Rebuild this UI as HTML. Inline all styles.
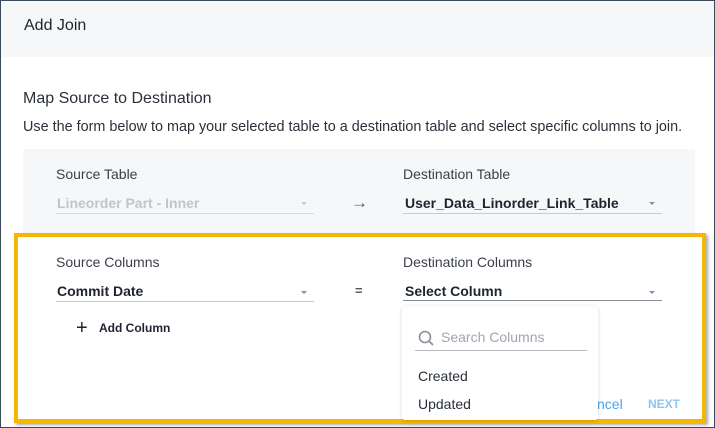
<!DOCTYPE html>
<html><head><style>
body{margin:0;width:715px;height:428px;overflow:hidden;font-family:"Liberation Sans",sans-serif;background:#fff;position:relative}
.frame{position:absolute;left:0;top:0;width:713px;height:426px;border:1px solid #3a4a5a;}
.hdr{position:absolute;left:1px;top:1px;width:713px;height:56px;background:#f6f7f9}
.t{position:absolute;white-space:nowrap;color:#1d232f}
.panel{position:absolute;left:23px;top:149px;width:672px;height:270px;background:#f6f7f9}
.line{position:absolute;height:1px;background:#c8ccd2}
.caret{position:absolute;width:0;height:0;border-left:3px solid transparent;border-right:3px solid transparent;border-top:3px solid #8a909a}
.yb{position:absolute;left:14px;top:233px;width:684px;height:182px;border:4px solid #f5b700;background:#fff;box-shadow:2px 2px 3px rgba(0,0,0,.35)}
</style></head><body>
<div class="frame"></div>
<div class="hdr"></div>
<div class="t" style="left:24px;top:17px;font-size:16px">Add Join</div>
<div class="t" style="left:23px;top:90px;font-size:16px;color:#2a303b">Map Source to Destination</div>
<div class="t" style="left:23px;top:119px;font-size:14.4px;color:#2a303b">Use the form below to map your selected table to a destination table and select specific columns to join.</div>
<div class="panel"></div>
<div class="t" style="left:56px;top:166px;font-size:14px;color:#3a404a">Source Table</div>
<div class="t" style="left:403px;top:166px;font-size:14px;color:#3a404a">Destination Table</div>
<div class="t" style="left:57px;top:195px;font-size:14px;color:#c0c5cc;font-weight:bold">Lineorder Part - Inner</div>
<div class="line" style="left:56px;top:213px;width:258px;background:#d8dbe0"></div>
<div class="caret" style="left:301px;top:202px;border-top-color:#c8ccd2"></div>
<div class="t" style="left:351px;top:193px;font-size:17px;color:#555">→</div>
<div class="t" style="left:405px;top:195px;font-size:14px;font-weight:bold">User_Data_Linorder_Link_Table</div>
<div class="line" style="left:403px;top:213px;width:259px"></div>
<div class="caret" style="left:649px;top:202px"></div>
<div class="yb"></div>
<div class="t" style="left:56px;top:254px;font-size:14px;color:#3a404a">Source Columns</div>
<div class="t" style="left:403px;top:254px;font-size:14px;color:#3a404a">Destination Columns</div>
<div class="t" style="left:57px;top:283px;font-size:14px;font-weight:bold">Commit Date</div>
<div class="line" style="left:56px;top:301px;width:258px"></div>
<div class="caret" style="left:301px;top:291px"></div>
<div class="t" style="left:355px;top:283px;font-size:13px;font-weight:bold;color:#555">=</div>
<div class="t" style="left:405px;top:283px;font-size:14px;font-weight:bold">Select Column</div>
<div class="line" style="left:403px;top:300px;width:259px;background:#8a909a"></div>
<div class="caret" style="left:649px;top:291px"></div>
<div class="t" style="left:76px;top:317px;font-size:20px">+</div>
<div class="t" style="left:99px;top:321px;font-size:12px;font-weight:bold">Add Column</div>
<div class="t" style="left:597px;top:396px;font-size:14px;color:#4aa3e8">ncel</div>
<div class="t" style="left:648px;top:397px;font-size:12px;color:#8ec6f2;font-weight:bold">NEXT</div>
<div style="position:absolute;left:402px;top:306px;width:196px;height:114px;background:#fff;box-shadow:0 1px 5px rgba(0,0,0,.15);border-radius:3px"></div>
<svg style="position:absolute;left:418px;top:330px" width="18" height="18" viewBox="0 0 18 18"><circle cx="7" cy="7" r="5.5" fill="none" stroke="#8a909a" stroke-width="1.6"/><line x1="11" y1="11" x2="15" y2="15" stroke="#8a909a" stroke-width="1.8"/></svg>
<div class="t" style="left:441px;top:329px;font-size:14px;color:#a0a6ae">Search Columns</div>
<div class="line" style="left:415px;top:350px;width:172px;background:#b8bcc2"></div>
<div class="t" style="left:418px;top:368px;font-size:14px;color:#2a303b">Created</div>
<div class="t" style="left:418px;top:396px;font-size:14px;color:#2a303b">Updated</div>
</body></html>
